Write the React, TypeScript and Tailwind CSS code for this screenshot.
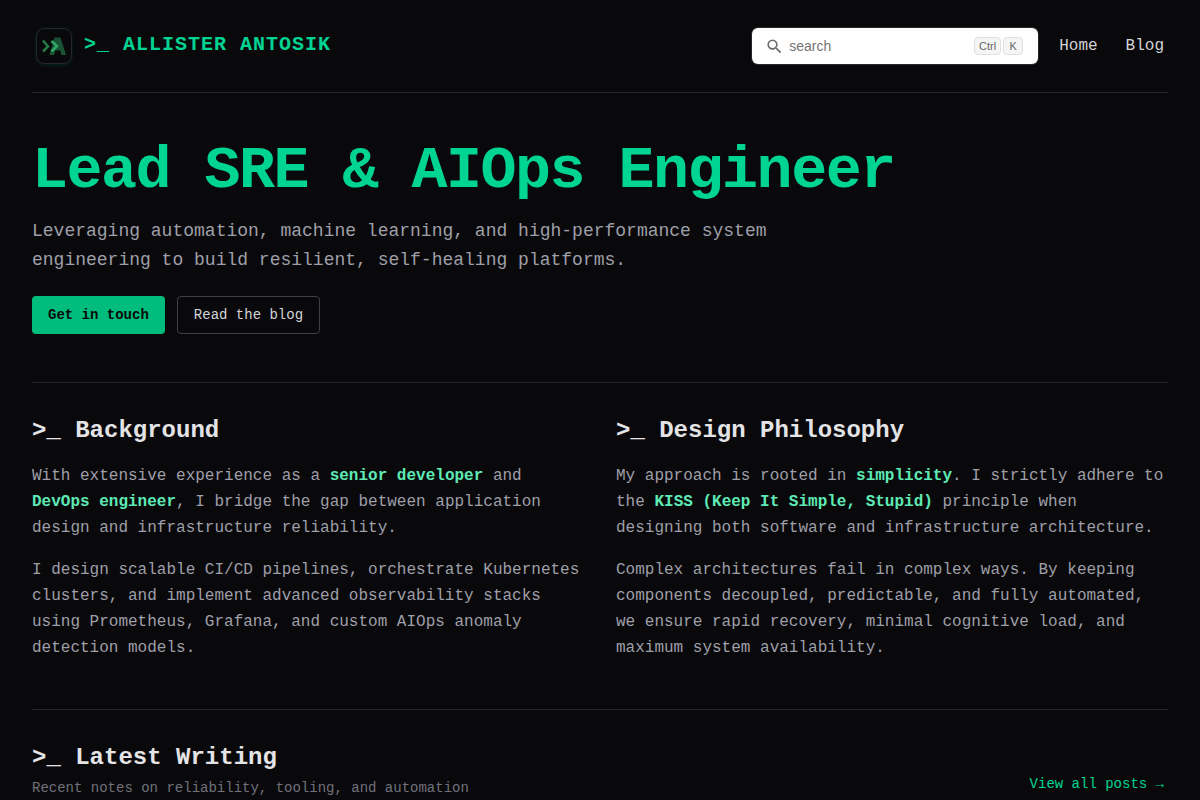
import React from 'react';

const LogoMark: React.FC = () => (
    <svg width="44" height="44" viewBox="0 0 44 44" fill="none">
        <defs>
            <filter id="glow" x="-20%" y="-20%" width="140%" height="140%">
                <feGaussianBlur stdDeviation="1.6" />
            </filter>
            <linearGradient id="letter" x1="0" y1="0" x2="0" y2="1">
                <stop offset="0" stopColor="#185035" />
                <stop offset="1" stopColor="#1a5535" />
            </linearGradient>
        </defs>
        <rect x="5" y="5.5" width="34" height="35" rx="8" stroke="#0c5a40" strokeWidth="1.5" opacity="0.5" filter="url(#glow)" />
        <rect x="4.5" y="4.5" width="35" height="35" rx="7.5" fill="#09090b" stroke="#242829" />
        <path d="M17.500 31 22.500 13.500h6L34 31h-4.500l-1.200-4.500h-5L22 31Z" fill="url(#letter)" />
        <path d="m11 16.500 5 6-5 5" stroke="#237b45" strokeWidth="2.500" />
        <path d="m19.500 17 5.500 5-5.500 5.500" stroke="#31a962" strokeWidth="2.500" />
    </svg>
);

const SearchBox: React.FC = () => (
    <div className="flex h-9 w-[286px] items-center rounded-md bg-white pl-[13px] pr-[15px] font-['Liberation_Sans',sans-serif] ring-1 ring-zinc-800">
        <svg width="19" height="19" viewBox="0 0 24 24" fill="#6b6b6b" className="shrink-0">
            <path d="M15.5 14h-.79l-.28-.27A6.471 6.471 0 0 0 16 9.5 6.5 6.5 0 1 0 9.5 16c1.61 0 3.09-.59 4.23-1.57l.27.28v.79l5 4.99L20.49 19l-4.99-5zm-6 0C7.01 14 5 11.99 5 9.5S7.01 5 9.5 5 14 7.01 14 9.5 11.99 14 9.5 14z" />
        </svg>
        <input
            type="text"
            placeholder="search"
            className="ml-[5px] min-w-0 flex-1 text-sm text-zinc-900 placeholder:text-[#757575] focus:outline-none"
        />
        <div className="flex gap-0.5 text-[11px] leading-4 text-[#666]">
            <kbd className="rounded border border-[#e0e0e0] bg-[#f5f5f5] px-1 font-['Liberation_Sans',sans-serif]">Ctrl</kbd>
            <kbd className="w-5 rounded border border-[#e0e0e0] bg-[#f5f5f5] text-center font-['Liberation_Sans',sans-serif]">K</kbd>
        </div>
    </div>
);

const Header: React.FC = () => (
    <header className="flex h-[93px] items-center justify-between border-b border-zinc-800">
        <a href="#" className="flex items-center gap-2 text-xl font-bold tracking-wider text-emerald-400">
            <LogoMark />
            <span className="-mt-0.5">&gt;_ ALLISTER ANTOSIK</span>
        </a>
        <nav className="flex items-center text-zinc-300">
            <SearchBox />
            <a href="#" className="ml-[21px]">Home</a>
            <a href="#blog" className="ml-7 mr-1">Blog</a>
        </nav>
    </header>
);

const Accent: React.FC<{ children: React.ReactNode }> = ({ children }) => (
    <strong className="font-bold text-emerald-300">{children}</strong>
);

export default function App() {
    return (
        <div className="h-screen overflow-hidden bg-zinc-950 px-8 font-['Liberation_Mono',monospace] text-zinc-200">
            <Header />

            <section className="border-b border-zinc-800 py-12">
                <h1 className="text-6xl font-bold leading-none tracking-tight text-emerald-400">
                    Lead SRE &amp; AIOps Engineer
                </h1>
                <p className="mt-4 max-w-3xl text-lg leading-relaxed text-zinc-400">
                    Leveraging automation, machine learning, and high-performance system engineering to build
                    resilient, self-healing platforms.
                </p>
                <div className="mt-5 flex gap-3 text-sm">
                    <a href="#contact" className="flex h-[38px] items-center rounded bg-emerald-500 px-4 font-bold text-zinc-950">
                        Get in touch
                    </a>
                    <a href="#blog" className="flex h-[38px] items-center rounded border border-zinc-700 px-4 text-zinc-300">
                        Read the blog
                    </a>
                </div>
            </section>

            <section className="grid grid-cols-2 gap-8 border-b border-zinc-800 pb-12 pt-8">
                <div className="space-y-4 leading-relaxed text-zinc-400">
                    <h2 className="text-2xl font-bold text-zinc-200">&gt;_ Background</h2>
                    <p>
                        With extensive experience as a <Accent>senior developer</Accent> and{' '}
                        <Accent>DevOps engineer</Accent>, I bridge the gap between application design and
                        infrastructure reliability.
                    </p>
                    <p>
                        I design scalable CI/CD pipelines, orchestrate Kubernetes clusters, and implement advanced
                        observability stacks using Prometheus, Grafana, and custom AIOps anomaly detection models.
                    </p>
                </div>
                <div className="space-y-4 leading-relaxed text-zinc-400">
                    <h2 className="text-2xl font-bold text-zinc-200">&gt;_ Design Philosophy</h2>
                    <p>
                        My approach is rooted in <Accent>simplicity</Accent>. I strictly adhere to the{' '}
                        <Accent>KISS (Keep It Simple, Stupid)</Accent> principle when designing both software and
                        infrastructure architecture.
                    </p>
                    <p>
                        Complex architectures fail in complex ways. By keeping components decoupled, predictable, and
                        fully automated, we ensure rapid recovery, minimal cognitive load, and maximum system
                        availability.
                    </p>
                </div>
            </section>

            <section id="blog" className="flex items-end justify-between pt-8">
                <div>
                    <h2 className="text-2xl font-bold">&gt;_ Latest Writing</h2>
                    <p className="mt-1 text-sm text-zinc-500">Recent notes on reliability, tooling, and automation</p>
                </div>
                <a href="#" className="p-1 text-sm text-emerald-400">View all posts →</a>
            </section>
        </div>
    );
}
